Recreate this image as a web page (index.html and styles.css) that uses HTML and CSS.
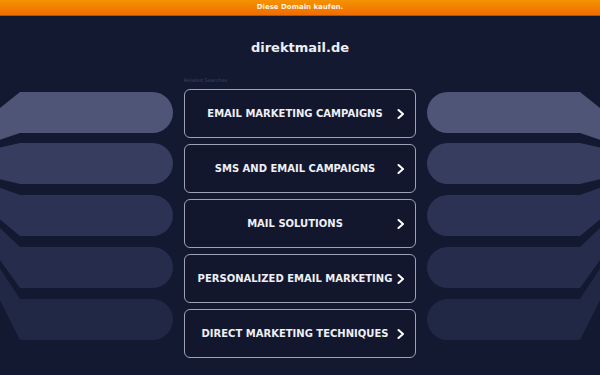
FILE: index.html
```html
<!DOCTYPE html>
<html lang="de">
<head>
    <meta charset="UTF-8">
    <meta name="viewport" content="width=device-width, initial-scale=1.0">
    <title>direktmail.de</title>
    <link rel="stylesheet" href="styles.css">
</head>
<body>
    <div class="topbar">Diese Domain kaufen.</div>

    <svg class="backdrop" width="600" height="375" viewBox="0 0 600 375" aria-hidden="true">
        <!-- left stack -->
        <path fill="#4e5576" d="M0,108 L20,92 L152.5,92 A20.5,20.5 0 0 1 152.5,133 L20,133 L0,139.8 Z"/>
        <path fill="#363d5e" d="M0,147.5 L20,143 L152.5,143 A20.5,20.5 0 0 1 152.5,184 L20,184 L0,179.3 Z"/>
        <path fill="#2b3253" d="M0,187.8 L20,195 L152.5,195 A20.5,20.5 0 0 1 152.5,236 L20,236 L0,219.6 Z"/>
        <path fill="#252c4c" d="M0,228.1 L20,247 L152.5,247 A20.5,20.5 0 0 1 152.5,288 L20,288 L0,259.9 Z"/>
        <path fill="#212846" d="M0,268.4 L20,299 L152.5,299 A20.5,20.5 0 0 1 152.5,340 L20,340 L0,300.2 Z"/>
        <!-- right stack -->
        <path fill="#4e5576" d="M600,108 L580,92 L447.5,92 A20.5,20.5 0 0 0 447.5,133 L580,133 L600,139.8 Z"/>
        <path fill="#363d5e" d="M600,147.5 L580,143 L447.5,143 A20.5,20.5 0 0 0 447.5,184 L580,184 L600,179.3 Z"/>
        <path fill="#2b3253" d="M600,187.8 L580,195 L447.5,195 A20.5,20.5 0 0 0 447.5,236 L580,236 L600,219.6 Z"/>
        <path fill="#252c4c" d="M600,228.1 L580,247 L447.5,247 A20.5,20.5 0 0 0 447.5,288 L580,288 L600,259.9 Z"/>
        <path fill="#212846" d="M600,268.4 L580,299 L447.5,299 A20.5,20.5 0 0 0 447.5,340 L580,340 L600,300.2 Z"/>
    </svg>

    <div class="content">
        <h1 class="domain">direktmail.de</h1>
        <div class="related">
            <p class="related-title">Related Searches</p>
            <ul class="links">
                <li><a class="link" href="#"><span class="label">EMAIL MARKETING CAMPAIGNS</span><svg class="chevron" viewBox="0 0 8 10"><path d="M1.5,1 L6,5 L1.5,9"/></svg></a></li>
                <li><a class="link" href="#"><span class="label">SMS AND EMAIL CAMPAIGNS</span><svg class="chevron" viewBox="0 0 8 10"><path d="M1.5,1 L6,5 L1.5,9"/></svg></a></li>
                <li><a class="link" href="#"><span class="label">MAIL SOLUTIONS</span><svg class="chevron" viewBox="0 0 8 10"><path d="M1.5,1 L6,5 L1.5,9"/></svg></a></li>
                <li><a class="link" href="#"><span class="label">PERSONALIZED EMAIL MARKETING</span><svg class="chevron" viewBox="0 0 8 10"><path d="M1.5,1 L6,5 L1.5,9"/></svg></a></li>
                <li><a class="link" href="#"><span class="label">DIRECT MARKETING TECHNIQUES</span><svg class="chevron" viewBox="0 0 8 10"><path d="M1.5,1 L6,5 L1.5,9"/></svg></a></li>
            </ul>
        </div>
    </div>
</body>
</html>
```

FILE: styles.css
```css
body {
    margin: 0;
    height: 375px;
    overflow: hidden;
    position: relative;
    background-color: #131930;
    font-family: "DejaVu Sans", Verdana, sans-serif;
    color: #eef0f6;
}

.topbar {
    height: 15px;
    line-height: 15px;
    text-align: center;
    font-size: 7px;
    font-weight: bold;
    color: #fff3df;
    background: linear-gradient(#f59300, #ef6c02);
    border-bottom: 1px solid #8a5a3c;
}

.backdrop {
    position: absolute;
    top: 0;
    left: 0;
    z-index: 0;
}

.content {
    position: relative;
    z-index: 1;
    width: 232px;
    margin: 0 auto;
}

.domain {
    margin: 0;
    padding-top: 24px;
    font-size: 13px;
    line-height: 16px;
    text-align: center;
    color: #eceef5;
}

.related-title {
    margin: 21px 0 0;
    font-size: 5px;
    line-height: 6px;
    color: #3f4563;
}

.links {
    list-style: none;
    margin: 6px 0 0;
    padding: 0;
    display: flex;
    flex-direction: column;
    gap: 6px;
}

.link {
    box-sizing: border-box;
    height: 49px;
    display: flex;
    align-items: center;
    padding: 0 10.5px;
    border: 1.5px solid #9ea2b5;
    border-radius: 6px;
    background-color: #12172d;
    color: #eef0f6;
    text-decoration: none;
    font-size: 10px;
    font-weight: bold;
    white-space: nowrap;
}

.label {
    flex: 1;
    text-align: center;
    margin-right: 2px;
}

.chevron {
    width: 8px;
    height: 10px;
    flex: none;
}

.chevron path {
    fill: none;
    stroke: #ffffff;
    stroke-width: 2;
    stroke-linecap: round;
    stroke-linejoin: round;
}
```
